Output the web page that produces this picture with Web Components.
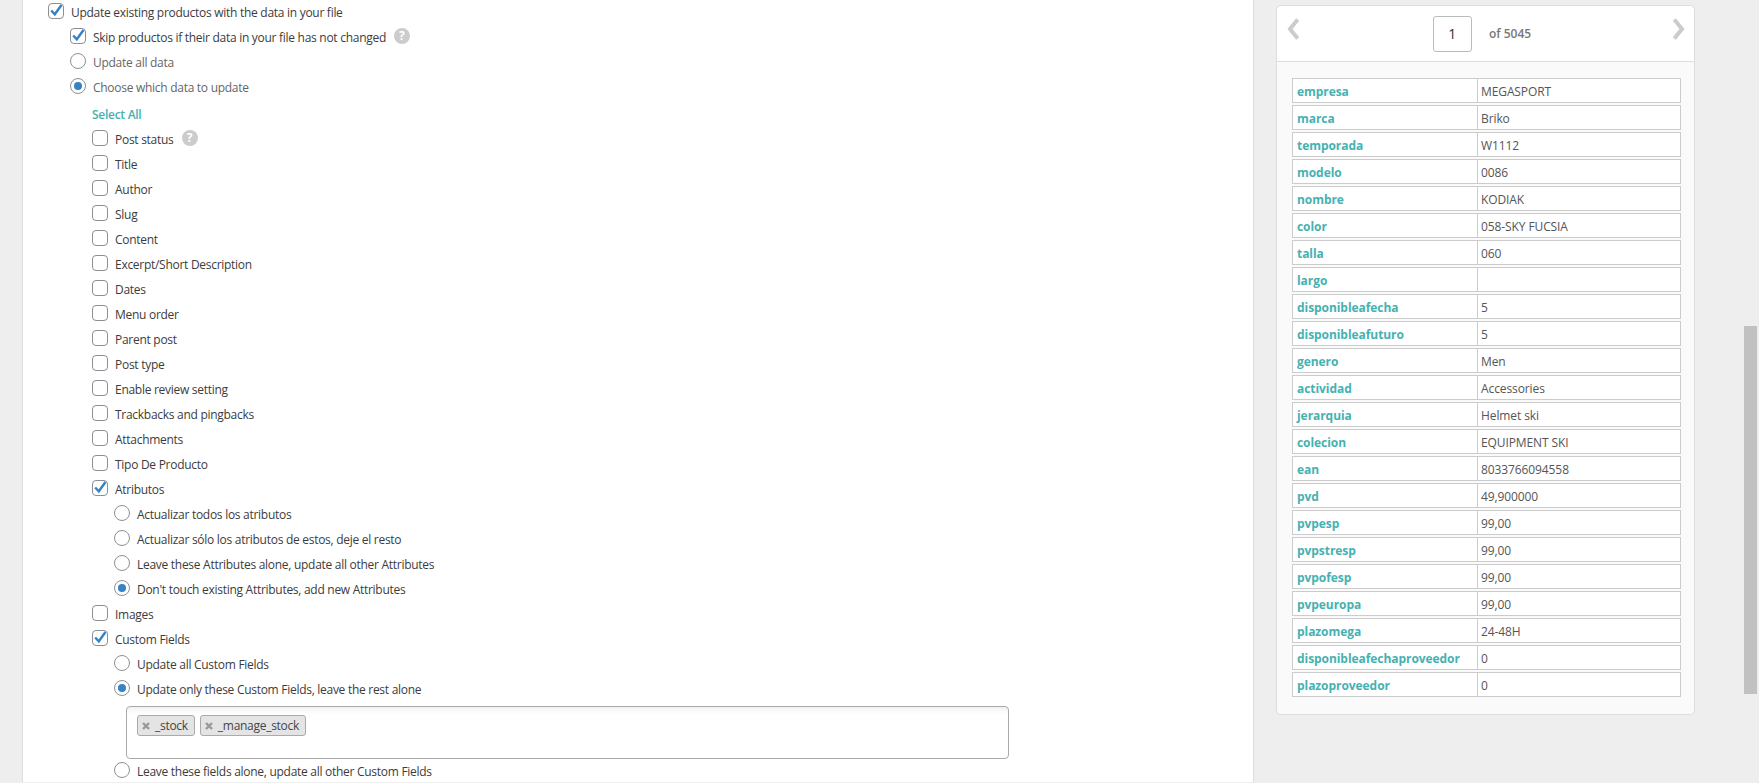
<!DOCTYPE html>
<html>
<head>
<meta charset="utf-8">
<style>
  html, body { margin: 0; height: 100%; overflow: hidden; background: #eee; }
  body { font: 12px/18px "Open Sans", sans-serif; color: #444; }
</style>
</head>
<body>
<import-page>
  <import-panel slot="left">
    <opt-row type="check" checked>Update existing productos with the data in your file</opt-row>
    <opt-group>
      <opt-row type="check" checked help>Skip productos if their data in your file has not changed</opt-row>
      <opt-row type="radio" muted>Update all data</opt-row>
      <opt-row type="radio" checked muted>Choose which data to update</opt-row>
      <opt-group>
        <select-all>Select All</select-all>
        <opt-row type="check" help>Post status</opt-row>
        <opt-row type="check">Title</opt-row>
        <opt-row type="check">Author</opt-row>
        <opt-row type="check">Slug</opt-row>
        <opt-row type="check">Content</opt-row>
        <opt-row type="check">Excerpt/Short Description</opt-row>
        <opt-row type="check">Dates</opt-row>
        <opt-row type="check">Menu order</opt-row>
        <opt-row type="check">Parent post</opt-row>
        <opt-row type="check">Post type</opt-row>
        <opt-row type="check">Enable review setting</opt-row>
        <opt-row type="check">Trackbacks and pingbacks</opt-row>
        <opt-row type="check">Attachments</opt-row>
        <opt-row type="check">Tipo De Producto</opt-row>
        <opt-row type="check" checked>Atributos</opt-row>
        <opt-group>
          <opt-row type="radio">Actualizar todos los atributos</opt-row>
          <opt-row type="radio">Actualizar sólo los atributos de estos, deje el resto</opt-row>
          <opt-row type="radio">Leave these Attributes alone, update all other Attributes</opt-row>
          <opt-row type="radio" checked>Don't touch existing Attributes, add new Attributes</opt-row>
        </opt-group>
        <opt-row type="check">Images</opt-row>
        <opt-row type="check" checked>Custom Fields</opt-row>
        <opt-group>
          <opt-row type="radio">Update all Custom Fields</opt-row>
          <opt-row type="radio" checked>Update only these Custom Fields, leave the rest alone</opt-row>
          <tag-box>
            <tag-chip>_stock</tag-chip>
            <tag-chip>_manage_stock</tag-chip>
          </tag-box>
          <opt-row type="radio">Leave these fields alone, update all other Custom Fields</opt-row>
        </opt-group>
      </opt-group>
    </opt-group>
  </import-panel>
  <preview-card slot="right" current="1" total="5045">
    <data-row name="empresa">MEGASPORT</data-row>
    <data-row name="marca">Briko</data-row>
    <data-row name="temporada">W1112</data-row>
    <data-row name="modelo">0086</data-row>
    <data-row name="nombre">KODIAK</data-row>
    <data-row name="color">058-SKY FUCSIA</data-row>
    <data-row name="talla">060</data-row>
    <data-row name="largo"></data-row>
    <data-row name="disponibleafecha">5</data-row>
    <data-row name="disponibleafuturo">5</data-row>
    <data-row name="genero">Men</data-row>
    <data-row name="actividad">Accessories</data-row>
    <data-row name="jerarquia">Helmet ski</data-row>
    <data-row name="colecion">EQUIPMENT SKI</data-row>
    <data-row name="ean">8033766094558</data-row>
    <data-row name="pvd">49,900000</data-row>
    <data-row name="pvpesp">99,00</data-row>
    <data-row name="pvpstresp">99,00</data-row>
    <data-row name="pvpofesp">99,00</data-row>
    <data-row name="pvpeuropa">99,00</data-row>
    <data-row name="plazomega">24-48H</data-row>
    <data-row name="disponibleafechaproveedor">0</data-row>
    <data-row name="plazoproveedor">0</data-row>
  </preview-card>
</import-page>

<script>
class ImportPage extends HTMLElement {
  constructor() {
    super().attachShadow({ mode: "open" }).innerHTML = `
    <style>
      :host { display: flex; height: 783px; overflow: hidden; position: relative; }
      .left { display: block; width: 1232px; margin-left: 22px; flex: none; }
      .right { display: block; margin-left: 22px; padding-top: 5px; flex: none; }
      .scrollbar {
        position: absolute;
        left: 1744px;
        top: 326px;
        width: 13px;
        height: 368px;
        background: #c1c1c1;
      }
    </style>
    <div class="left"><slot name="left"></slot></div>
    <div class="right"><slot name="right"></slot></div>
    <div class="scrollbar"></div>
    `;
  }
}
customElements.define("import-page", ImportPage);

class ImportPanel extends HTMLElement {
  constructor() {
    super().attachShadow({ mode: "open" }).innerHTML = `
    <style>
      :host {
        display: block;
        box-sizing: border-box;
        height: 783px;
        background: #fff;
        border-left: 1px solid #ddd;
        border-right: 1px solid #ddd;
        padding-left: 25px;
        letter-spacing: -0.28px;
      }
      .inner { margin-top: -1px; }
    </style>
    <div class="inner"><slot></slot></div>
    `;
  }
}
customElements.define("import-panel", ImportPanel);

class OptGroup extends HTMLElement {
  constructor() {
    super().attachShadow({ mode: "open" }).innerHTML = `
    <style>
      :host { display: block; padding-left: 22px; }
    </style>
    <slot></slot>
    `;
  }
}
customElements.define("opt-group", OptGroup);

const CHECK_MARK = `<svg class="tick" viewBox="0 0 16 16" width="16" height="16"><path d="M3.2 7.5 L6.8 11.3 L13.5 2" fill="none" stroke="#3582c4" stroke-width="2.4"/></svg>`;
const HELP_ICON = `<span class="help">?</span>`;

class OptRow extends HTMLElement {
  constructor() {
    super().attachShadow({ mode: "open" }).innerHTML = `
    <style>
      :host {
        display: flex;
        align-items: flex-start;
        height: 25px;
        line-height: 25px;
        color: #3c3c3c;
      }
      :host([muted]) { color: #666; }
      .box {
        box-sizing: border-box;
        flex: none;
        width: 16px;
        height: 16px;
        margin: 4px 7px 0 0;
        border: 1px solid #8c8f94;
        border-radius: 4px;
        background: #fff;
        position: relative;
      }
      :host([type="radio"]) .box { border-radius: 50%; }
      .label { margin-top: 1px; }
      .tick { position: absolute; left: -1px; top: -1px; }
      .dot {
        position: absolute;
        left: 3px;
        top: 3px;
        width: 8px;
        height: 8px;
        border-radius: 50%;
        background: #3582c4;
      }
      .help {
        flex: none;
        width: 16px;
        height: 16px;
        margin: 4px 0 0 8px;
        border-radius: 50%;
        background: #ccc;
        color: #fff;
        font-weight: 700;
        font-size: 12px;
        line-height: 16px;
        letter-spacing: 0;
        text-align: center;
      }
    </style>
    <span class="box"></span><span class="label"><slot></slot></span>
    `;
  }
  connectedCallback() {
    const box = this.shadowRoot.querySelector(".box");
    if (this.hasAttribute("checked")) {
      box.innerHTML = this.getAttribute("type") === "radio" ? `<span class="dot"></span>` : CHECK_MARK;
    }
    if (this.hasAttribute("help") && !this.shadowRoot.querySelector(".help")) {
      this.shadowRoot.querySelector(".label").insertAdjacentHTML("afterend", HELP_ICON);
    }
  }
}
customElements.define("opt-row", OptRow);

class SelectAll extends HTMLElement {
  constructor() {
    super().attachShadow({ mode: "open" }).innerHTML = `
    <style>
      :host {
        display: block;
        height: 27px;
        line-height: 31px;
        color: #46b1b1;
        font-weight: 600;
      }
    </style>
    <slot></slot>
    `;
  }
}
customElements.define("select-all", SelectAll);

class TagBox extends HTMLElement {
  constructor() {
    super().attachShadow({ mode: "open" }).innerHTML = `
    <style>
      :host {
        display: flex;
        align-items: flex-start;
        gap: 5px;
        box-sizing: border-box;
        width: 883px;
        height: 53px;
        margin: 5px 0 -1px 12px;
        padding: 8px 10px;
        background: #fff;
        border: 1px solid #aaa;
        border-radius: 4px;
        box-shadow: inset 0 8px 8px -8px rgba(0, 0, 0, .12);
      }
    </style>
    <slot></slot>
    `;
  }
}
customElements.define("tag-box", TagBox);

class TagChip extends HTMLElement {
  constructor() {
    super().attachShadow({ mode: "open" }).innerHTML = `
    <style>
      :host {
        display: flex;
        align-items: center;
        box-sizing: border-box;
        height: 21px;
        padding: 0 6px 0 4px;
        background: #e4e4e4;
        border: 1px solid #aaa;
        border-radius: 3px;
        color: #444;
      }
      svg { margin-right: 5px; }
    </style>
    <svg viewBox="0 0 8 8" width="8" height="8"><path d="M1 1 L7 7 M7 1 L1 7" stroke="#999" stroke-width="2.4"/></svg>
    <slot></slot>
    `;
  }
}
customElements.define("tag-chip", TagChip);

class PreviewCard extends HTMLElement {
  constructor() {
    super().attachShadow({ mode: "open" }).innerHTML = `
    <style>
      :host {
        display: block;
        box-sizing: border-box;
        width: 419px;
        height: 710px;
        background: #fafafa;
        border: 1px solid #ddd;
        border-radius: 5px;
      }
      .nav {
        display: flex;
        align-items: center;
        box-sizing: border-box;
        height: 56px;
        padding: 0 9px 0 10px;
        background: #fff;
        border-bottom: 1px solid #ddd;
        border-radius: 5px 5px 0 0;
      }
      .nav svg { align-self: flex-start; margin-top: 12px; }
      .page {
        display: flex;
        align-items: center;
        margin: 0 auto;
        padding-left: 12px;
      }
      .current {
        box-sizing: border-box;
        width: 39px;
        height: 36px;
        margin-right: 17px;
        background: #fff;
        border: 1px solid #bbb;
        border-radius: 3px;
        color: #333;
        font-size: 14px;
        line-height: 34px;
        text-align: center;
      }
      .total { color: #777; font-weight: 600; padding-right: 20px; }
      .rows {
        display: flex;
        flex-direction: column;
        gap: 2px;
        padding: 16px 13px 0 15px;
      }
    </style>
    <div class="nav">
      <svg viewBox="0 0 13 22" width="13" height="22"><path d="M10.7 1.5 L3 11 L10.7 20.5" fill="none" stroke="#ccc" stroke-width="4"/></svg>
      <div class="page"><div class="current"></div><div class="total"></div></div>
      <svg viewBox="0 0 13 22" width="13" height="22"><path d="M2.3 1.5 L10 11 L2.3 20.5" fill="none" stroke="#ccc" stroke-width="4"/></svg>
    </div>
    <div class="rows"><slot></slot></div>
    `;
  }
  connectedCallback() {
    const { shadowRoot } = this;
    shadowRoot.querySelector(".current").textContent = this.getAttribute("current");
    shadowRoot.querySelector(".total").textContent = "of " + this.getAttribute("total");
  }
}
customElements.define("preview-card", PreviewCard);

class DataRow extends HTMLElement {
  constructor() {
    super().attachShadow({ mode: "open" }).innerHTML = `
    <style>
      :host {
        display: flex;
        box-sizing: border-box;
        height: 25px;
        background: #fff;
        border: 1px solid #ccc;
        line-height: 26px;
      }
      .name {
        box-sizing: border-box;
        width: 185px;
        padding-left: 4px;
        border-right: 1px solid #ccc;
        color: #46b1b1;
        font-weight: 700;
        letter-spacing: -0.06px;
      }
      .value { padding-left: 3px; color: #555; letter-spacing: -0.1px; }
    </style>
    <div class="name"></div>
    <div class="value"><slot></slot></div>
    `;
  }
  connectedCallback() {
    this.shadowRoot.querySelector(".name").textContent = this.getAttribute("name");
  }
}
customElements.define("data-row", DataRow);
</script>
</body>
</html>
